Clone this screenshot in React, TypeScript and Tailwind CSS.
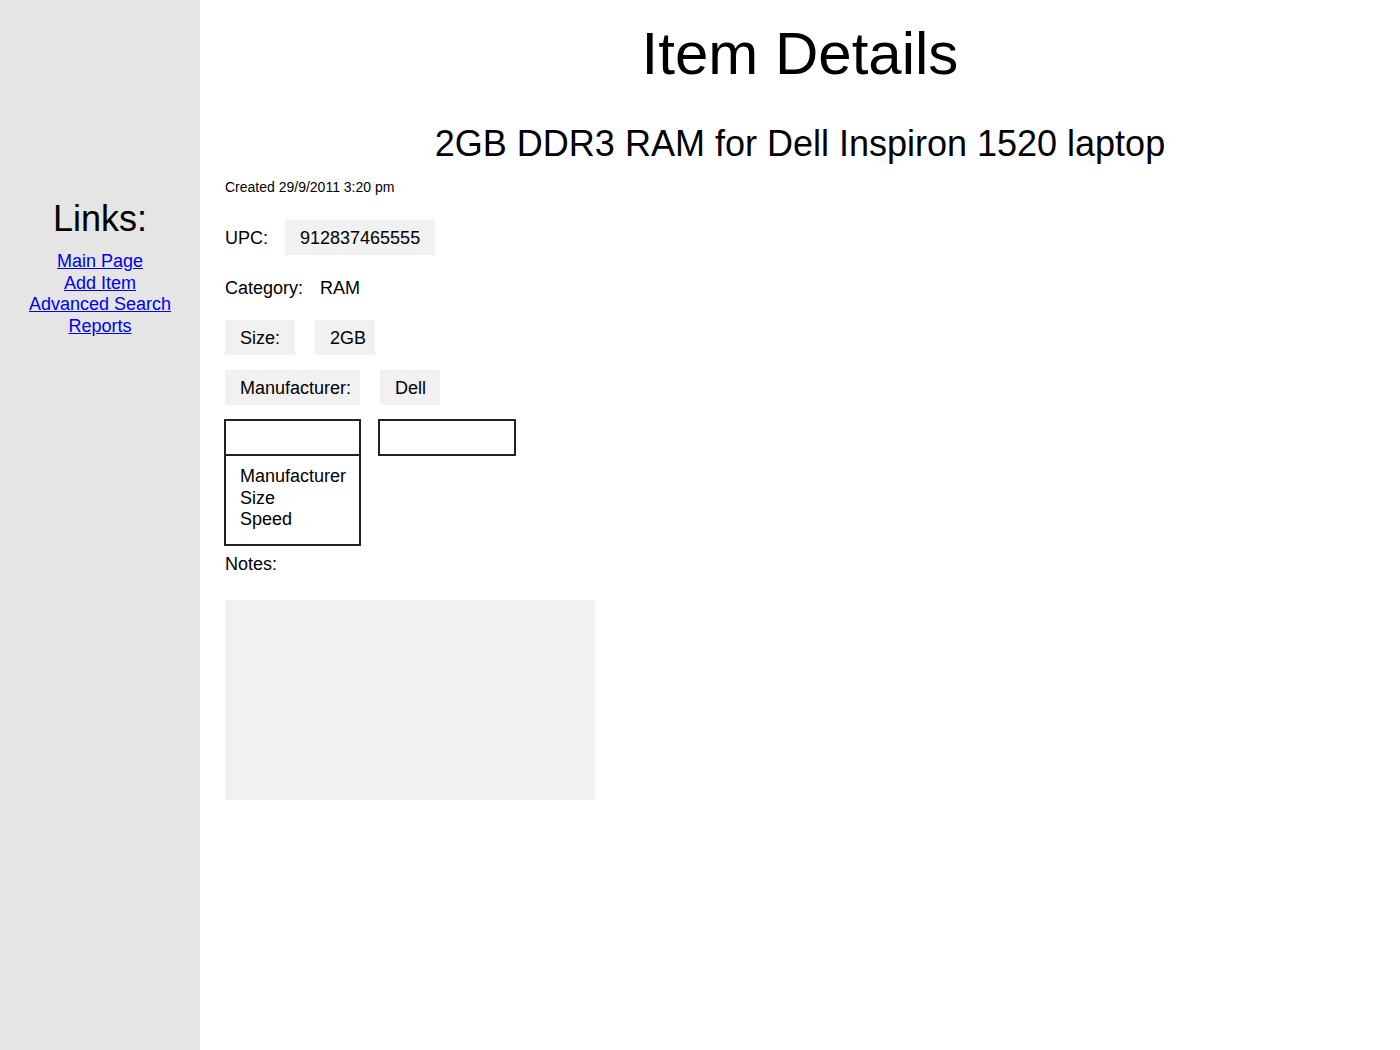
const LINKS = ['Main Page', 'Add Item', 'Advanced Search', 'Reports']

const FIELD_OPTIONS = ['Manufacturer', 'Size', 'Speed']

export default function App() {
  return (
    <div className="flex min-h-screen bg-white text-black font-['Liberation_Sans',Arial,sans-serif]">
      {/* Sidebar */}
      <aside className="w-[200px] shrink-0 bg-[#e5e5e5] pt-[199px] text-center">
        <h3 className="text-[36px] leading-[40px]">Links:</h3>
        <nav className="mt-[12px] flex flex-col items-center text-[18px] leading-[21.7px]">
          {LINKS.map((label) => (
            <a key={label} href="#" className="text-[#0000ee] underline">
              {label}
            </a>
          ))}
        </nav>
      </aside>

      {/* Main content */}
      <main className="flex-1">
        <h1 className="mt-[24px] text-center text-[60px] leading-none">Item Details</h1>
        <h2 className="mt-[42px] text-center text-[36px] leading-none">
          2GB DDR3 RAM for Dell Inspiron 1520 laptop
        </h2>

        <div className="pl-[25px]">
          <p className="mt-[18px] text-[14px] leading-none">Created 29/9/2011 3:20 pm</p>

          <div className="mt-[26px] flex flex-col items-start text-[18px] leading-[21px]">
            <div className="flex items-center gap-[17px]">
              <span className="pt-[1px]">UPC:</span>
              <span className="w-[150px] bg-[#f0f1f0] px-[15px] pb-[6px] pt-[8px]">912837465555</span>
            </div>
            <div className="mt-[15px] flex items-center gap-[17px] pb-[6px] pt-[8px]">
              <span>Category:</span>
              <span>RAM</span>
            </div>
            <div className="mt-[15px] flex gap-[20px]">
              <span className="w-[70px] bg-[#f0f1f0] px-[15px] pb-[6px] pt-[8px]">Size:</span>
              <span className="w-[60px] bg-[#f0f1f0] px-[15px] pb-[6px] pt-[8px]">2GB</span>
            </div>
            <div className="mt-[15px] flex gap-[20px]">
              <span className="w-[135px] whitespace-nowrap bg-[#f0f1f0] px-[15px] pb-[6px] pt-[8px]">Manufacturer:</span>
              <span className="w-[60px] bg-[#f0f1f0] px-[15px] pb-[6px] pt-[8px]">Dell</span>
            </div>

            {/* Field selectors, first one open */}
            <div className="mt-[14px] -ml-[1px] flex items-start gap-[17px]">
              <div className="flex w-[137px] flex-col">
                <div className="h-[37px] border-2 border-[#222]" />
                <ul className="-mt-[2px] border-2 border-[#222] pb-[13px] pl-[14px] pt-[10px] leading-[21.5px]">
                  {FIELD_OPTIONS.map((opt) => (
                    <li key={opt}>{opt}</li>
                  ))}
                </ul>
              </div>
              <div className="h-[37px] w-[138px] border-2 border-[#222]" />
            </div>
          </div>

          <p className="mt-[8px] text-[18px] leading-[21px]">Notes:</p>
          <div className="mt-[25px] h-[200px] w-[370px] bg-[#f0f1f0]" />
        </div>
      </main>
    </div>
  )
}
